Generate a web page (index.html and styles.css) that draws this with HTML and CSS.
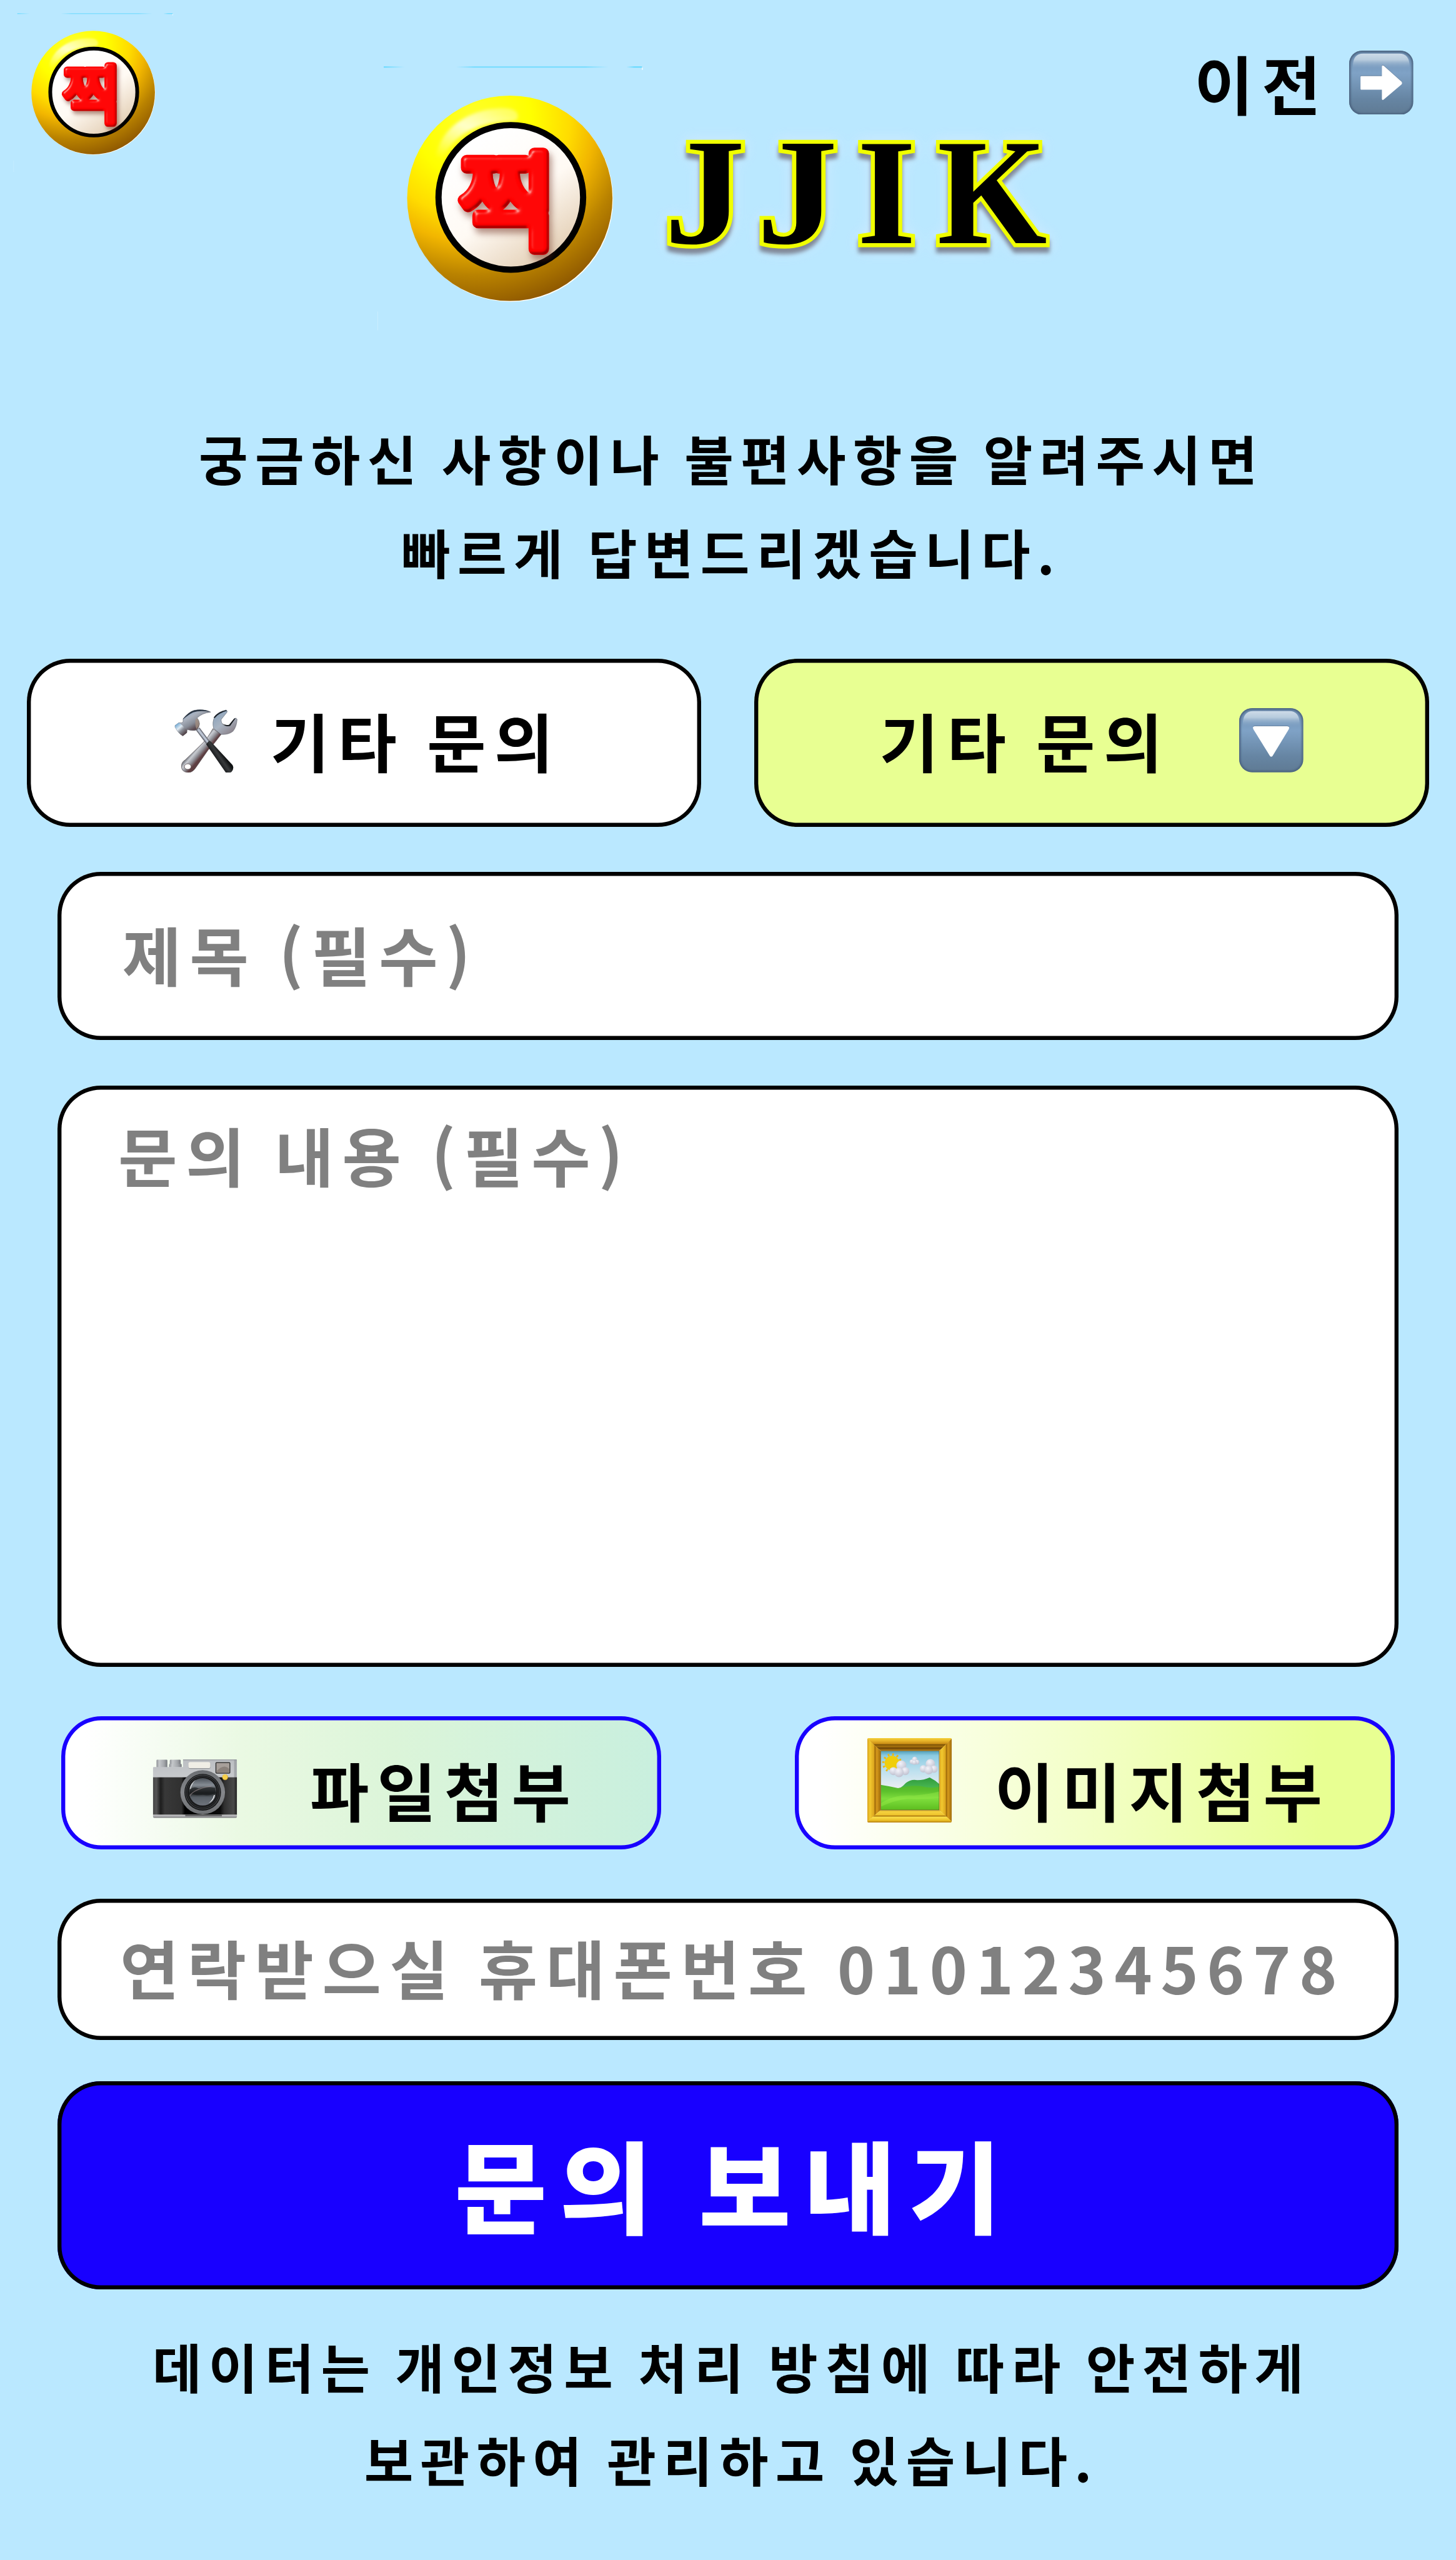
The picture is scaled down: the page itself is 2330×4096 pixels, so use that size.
FILE: index.html
```html
<!DOCTYPE html>
<html lang="ko">
<head>
<meta charset="utf-8">
<title>JJIK 문의</title>
<link rel="stylesheet" href="styles.css">
</head>
<body>
<svg class="defs" width="0" height="0" aria-hidden="true">
  <defs>
    <radialGradient id="ball" gradientUnits="userSpaceOnUse" cx="212" cy="135" r="352">
      <stop offset="0" stop-color="#ffff2a"/><stop offset=".3" stop-color="#ffff00"/>
      <stop offset=".5" stop-color="#ffdc00"/><stop offset=".63" stop-color="#f2b600"/>
      <stop offset=".8" stop-color="#b98200"/><stop offset="1" stop-color="#895300"/>
    </radialGradient>
    <linearGradient id="face" x1=".3" y1=".1" x2=".85" y2=".9">
      <stop offset="0" stop-color="#fff"/><stop offset=".5" stop-color="#fffaf4"/><stop offset="1" stop-color="#e2cdb2"/>
    </linearGradient>
    <linearGradient id="gloss" x1=".7" y1="0" x2=".1" y2="1">
      <stop offset="0" stop-color="#fff" stop-opacity=".35"/><stop offset=".4" stop-color="#fff" stop-opacity=".75"/><stop offset="1" stop-color="#fff" stop-opacity="0"/>
    </linearGradient>
    <filter id="soft" x="-20%" y="-20%" width="140%" height="140%"><feGaussianBlur stdDeviation="3"/></filter>
    <filter id="bevel" x="-20%" y="-20%" width="150%" height="150%" color-interpolation-filters="sRGB">
      <feGaussianBlur in="SourceAlpha" stdDeviation="4" result="b"/>
      <feSpecularLighting in="b" surfaceScale="7" specularConstant=".75" specularExponent="26" lighting-color="#ffc8c0" result="s">
        <feDistantLight azimuth="225" elevation="36"/>
      </feSpecularLighting>
      <feComposite in="s" in2="SourceAlpha" operator="in" result="hl"/>
      <feOffset in="SourceAlpha" dx="-3" dy="-4" result="o"/>
      <feComposite in="SourceAlpha" in2="o" operator="out" result="edge"/>
      <feGaussianBlur in="edge" stdDeviation="1.6" result="eb"/>
      <feFlood flood-color="#8a0000" flood-opacity=".9"/>
      <feComposite in2="eb" operator="in" result="ec"/>
      <feComposite in="ec" in2="SourceAlpha" operator="in" result="dark"/>
      <feGaussianBlur in="SourceAlpha" stdDeviation="6" result="sb"/>
      <feOffset in="sb" dx="5" dy="9" result="so"/>
      <feFlood flood-color="#6b2a1a" flood-opacity=".5"/>
      <feComposite in2="so" operator="in" result="sh"/>
      <feMerge><feMergeNode in="sh"/><feMergeNode in="SourceGraphic"/><feMergeNode in="dark"/><feMergeNode in="hl"/></feMerge>
    </filter>
    <linearGradient id="trace"><stop offset="0" stop-color="#5fd8ff"/><stop offset=".08" stop-color="#5fd8ff" stop-opacity="0"/><stop offset=".28" stop-color="#5fd8ff" stop-opacity="0"/><stop offset=".35" stop-color="#5fd8ff" stop-opacity=".8"/><stop offset=".78" stop-color="#5fd8ff" stop-opacity=".8"/><stop offset=".87" stop-color="#5fd8ff" stop-opacity="0"/><stop offset=".94" stop-color="#5fd8ff" stop-opacity="0"/><stop offset=".97" stop-color="#5fd8ff"/></linearGradient>
    <linearGradient id="key" x1="0" y1="0" x2="0" y2="1">
      <stop offset="0" stop-color="#6c8db0"/><stop offset=".35" stop-color="#7fa2c6"/><stop offset=".75" stop-color="#6685a3"/><stop offset="1" stop-color="#5f7a93"/>
    </linearGradient>
    <linearGradient id="keyshine" x1="0" y1="0" x2="0" y2="1">
      <stop offset="0" stop-color="#cddbe8"/><stop offset=".4" stop-color="#b7cbdd"/><stop offset="1" stop-color="#7fa2c6" stop-opacity="0"/>
    </linearGradient>
    <filter id="keyedge"><feGaussianBlur stdDeviation="2.5"/></filter>
    <clipPath id="keyclip"><rect width="192" height="192" rx="39"/></clipPath>
    <symbol id="logo" viewBox="0 0 560 560">
      <rect x="52" y="39.8" width="466" height="2.2" fill="url(#trace)"/>
      <rect x="518" y="42" width="1.4" height="4" fill="#fff"/>
      <rect x="40.6" y="482" width="1" height="34" fill="#cdeeff"/>
      <circle cx="281" cy="279.5" r="185" fill="#fff"/>
      <circle cx="279.5" cy="277.7" r="185.3" fill="url(#ball)"/>
      <path d="M146 206C150 160 196 118 262 115Q292 114 294 128Q296 138 281 139C222 140 184 160 160 201Q150 216 146 206Z" fill="url(#gloss)" filter="url(#soft)"/>
      <circle cx="281.3" cy="276.1" r="130.5" fill="url(#face)" stroke="#000" stroke-width="11.2"/>
      <text class="mark" x="275" y="354" text-anchor="middle" filter="url(#bevel)">찍</text>
    </symbol>
    <symbol id="keycap" viewBox="0 0 192 192">
      <rect width="192" height="192" rx="39" fill="url(#key)"/>
      <g clip-path="url(#keyclip)"><rect width="192" height="192" rx="39" fill="none" stroke="#4b6480" stroke-width="9" filter="url(#keyedge)"/></g>
      <path d="M11 48Q11 9 42 9H150Q181 9 181 48V56H11Z" fill="url(#keyshine)"/>
    </symbol>
    <linearGradient id="steel" gradientUnits="userSpaceOnUse" x1="120" y1="160" x2="220" y2="330">
      <stop offset="0" stop-color="#8fb0d6"/><stop offset=".45" stop-color="#a9b0bc"/><stop offset=".75" stop-color="#878c97"/><stop offset="1" stop-color="#5b4a50"/>
    </linearGradient>
    <linearGradient id="poll" gradientUnits="userSpaceOnUse" x1="90" y1="270" x2="170" y2="360">
      <stop offset="0" stop-color="#6fa6d0"/><stop offset=".35" stop-color="#dfeaf3"/><stop offset=".6" stop-color="#8b8f98"/><stop offset="1" stop-color="#4a3a3e"/>
    </linearGradient>
    <linearGradient id="wrench" gradientUnits="userSpaceOnUse" x1="270" y1="470" x2="340" y2="530">
      <stop offset="0" stop-color="#6d7178"/><stop offset=".3" stop-color="#c9ccd2"/><stop offset=".65" stop-color="#8f9097"/><stop offset="1" stop-color="#5e3f42"/>
    </linearGradient>
    <linearGradient id="jaw" gradientUnits="userSpaceOnUse" x1="440" y1="170" x2="580" y2="360">
      <stop offset="0" stop-color="#8ba3bb"/><stop offset=".5" stop-color="#a9b4c2"/><stop offset="1" stop-color="#8a8189"/>
    </linearGradient>
    <linearGradient id="grip" gradientUnits="userSpaceOnUse" x1="445" y1="590" x2="510" y2="545">
      <stop offset="0" stop-color="#17191b"/><stop offset=".55" stop-color="#383a3c"/><stop offset="1" stop-color="#101213"/>
    </linearGradient>
    <linearGradient id="body" x1="0" x2="1"><stop offset="0" stop-color="#454545"/><stop offset=".04" stop-color="#555"/><stop offset=".09" stop-color="#1d1d1d"/><stop offset=".14" stop-color="#383838"/><stop offset=".34" stop-color="#303030"/><stop offset=".38" stop-color="#000"/><stop offset=".8" stop-color="#0a0a0a"/><stop offset=".85" stop-color="#303030"/><stop offset=".96" stop-color="#4a4a4a"/><stop offset="1" stop-color="#222"/></linearGradient>
    <linearGradient id="plate" x1="0" y1="0" x2="0" y2="1"><stop offset="0" stop-color="#999ca1"/><stop offset=".1" stop-color="#bdc0c4"/><stop offset="1" stop-color="#c7c9cc"/></linearGradient>
    <linearGradient id="dial" x1="0" x2="1"><stop offset="0" stop-color="#8d9095"/><stop offset=".25" stop-color="#c5c8cb"/><stop offset=".7" stop-color="#a3a6aa"/><stop offset="1" stop-color="#777a7f"/></linearGradient>
    <linearGradient id="glass" x1="0" y1="0" x2="0" y2="1"><stop offset="0" stop-color="#4c5259"/><stop offset=".25" stop-color="#858c94"/><stop offset=".42" stop-color="#4e5154"/><stop offset=".55" stop-color="#1f2223"/><stop offset=".7" stop-color="#596067"/><stop offset="1" stop-color="#6f747d"/></linearGradient>
    <linearGradient id="rim" x1="0" y1="0" x2="0" y2="1"><stop offset="0" stop-color="#6b6e72"/><stop offset=".5" stop-color="#85878b"/><stop offset="1" stop-color="#6e7073"/></linearGradient>
    <linearGradient id="foot" x1="0" y1="0" x2="0" y2="1"><stop offset="0" stop-color="#c5c5c7"/><stop offset=".6" stop-color="#a5a5a8"/><stop offset="1" stop-color="#6d6d70"/></linearGradient>
    <linearGradient id="sky" x1="0" y1="0" x2="0" y2="1"><stop offset="0" stop-color="#4f9db5"/><stop offset=".08" stop-color="#8ccbe2"/><stop offset=".35" stop-color="#bfe1ef"/><stop offset=".65" stop-color="#efeff2"/></linearGradient>
    <linearGradient id="hill" x1="0" y1="0" x2="0" y2="1"><stop offset="0" stop-color="#4fb52e"/><stop offset=".25" stop-color="#5cc02c"/><stop offset=".55" stop-color="#7edd3c"/><stop offset="1" stop-color="#5cbd1f"/></linearGradient>
    <linearGradient id="ridge" x1="0" y1="0" x2="0" y2="1"><stop offset="0" stop-color="#2f9a3c"/><stop offset="1" stop-color="#5fd065"/></linearGradient>
    <linearGradient id="gtop" x1="0" y1="0" x2="0" y2="1"><stop offset="0" stop-color="#f3cf33"/><stop offset=".2" stop-color="#e9b62a"/><stop offset=".45" stop-color="#c98c14"/><stop offset=".52" stop-color="#7b5207"/><stop offset=".65" stop-color="#a9740e"/><stop offset=".8" stop-color="#6d4305"/><stop offset="1" stop-color="#c08a1c"/></linearGradient>
    <linearGradient id="gside" x1="0" x2="1"><stop offset="0" stop-color="#d9a31e"/><stop offset=".2" stop-color="#f2c92f"/><stop offset=".5" stop-color="#dba51d"/><stop offset=".56" stop-color="#9c6808"/><stop offset=".7" stop-color="#d79a1c"/><stop offset="1" stop-color="#a06c0a"/></linearGradient>
    <linearGradient id="gbot" x1="0" y1="0" x2="0" y2="1"><stop offset="0" stop-color="#b87e12"/><stop offset=".1" stop-color="#f5d240"/><stop offset=".4" stop-color="#efc42c"/><stop offset=".48" stop-color="#a46f0a"/><stop offset=".56" stop-color="#fbe04a"/><stop offset=".85" stop-color="#e9bb24"/><stop offset="1" stop-color="#b27a10"/></linearGradient>
    <radialGradient id="cloud" cx=".4" cy=".3" r=".8"><stop offset="0" stop-color="#f3f3fa"/><stop offset="1" stop-color="#b9bbcb"/></radialGradient>
    <clipPath id="canvasclip"><rect x="40" y="38" width="176" height="178"/></clipPath>
  </defs>
</svg>

<header class="header">
  <svg class="logo-small" role="img" aria-label="찍"><use href="#logo"/></svg>
  <div class="brand">
    <svg class="logo-large" role="img" aria-label="찍"><use href="#logo"/></svg>
    <h1 class="brand-name"><span class="j">J</span><span class="j">J</span><span class="i">I</span><span class="k">K</span></h1>
  </div>
  <a class="prev"><span>이전</span>
    <svg class="key-icon" viewBox="0 0 192 192"><use href="#keycap"/><path d="M36 76H98V47Q99 42 104 46L157 93Q160 97 157 101L104 146Q99 150 98 145V117H36Q34 117 34 114V79Q34 76 36 76Z" fill="#5a7088" opacity=".6" transform="translate(0 -1.5)"/><path d="M36 76H98V47Q99 42 104 46L157 93Q160 97 157 101L104 146Q99 150 98 145V117H36Q34 117 34 114V79Q34 76 36 76Z" fill="#fff"/></svg>
  </a>
</header>

<p class="copy intro">궁금하신 사항이나 불편사항을 알려주시면<br>빠르게 답변드리겠습니다.</p>

<main class="form">
  <div class="kinds">
    <button class="box kind">
      <svg class="key-icon" viewBox="66 126 576 576">
        <path d="M418 310L492 362C460 400 420 460 376 500L268 655Q236 708 190 704Q130 696 136 640Q140 606 170 590L330 436Q372 392 418 310Z" fill="url(#wrench)" stroke="#50484c" stroke-width="4"/>
        <ellipse cx="192" cy="651" rx="30" ry="25" fill="#fff" stroke="#4d3a3c" stroke-width="4"/>
        <path d="M536 143Q549 148 545 162L492 228Q490 262 518 281Q545 290 566 281L612 220Q626 209 635 226Q632 292 598 334Q560 366 492 362L424 308Q408 250 436 200Q466 158 536 143Z" fill="url(#jaw)" stroke="#4a525c" stroke-width="3"/>
        <path d="M424 210Q460 158 536 144L544 150Q470 170 434 216Z" fill="#1d242c"/>
        <path d="M500 262Q522 284 562 276L608 220L622 216L572 286Q528 296 500 262Z" fill="#15191d"/>
        <path d="M264 322L298 300L388 420L360 452Z" fill="#72757f"/>
        <path d="M276 322L292 308L378 424L366 438Z" fill="#bac3d2"/>
        <path d="M357 450L386 418Q402 428 412 440L594 636Q612 668 584 700Q556 716 532 702Z" fill="url(#grip)"/>
        <path d="M78 282L112 257Q140 262 150 250L150 222Q200 160 250 146Q330 130 398 162Q320 170 276 214Q296 236 298 268Q296 300 268 322Q244 334 186 318L184 346L148 375Q110 358 78 296Z" fill="url(#steel)" stroke="#555962" stroke-width="3"/>
        <path d="M78 282L112 257Q150 282 184 324L184 346L148 375Q110 358 78 296Z" fill="url(#poll)"/>
        <path d="M150 222Q200 160 250 146Q330 130 398 160Q300 144 240 164Q200 184 150 226Z" fill="#2a3542"/>
        <path d="M262 226Q276 216 280 222Q298 248 296 276Q286 300 270 312Q254 280 262 226Z" fill="#a18f82" opacity=".8"/>
      </svg>
      <span>기타 문의</span>
    </button>
    <button class="box kind kind-select">
      <span>기타 문의</span>
      <svg class="key-icon" viewBox="0 0 192 192"><use href="#keycap"/><path d="M47 54H143Q153 55 148 64L100 143Q96 148 92 143L43 64Q38 55 47 54Z" fill="#5a7088" opacity=".6" transform="translate(0 -1.5)"/><path d="M47 54H143Q153 55 148 64L100 143Q96 148 92 143L43 64Q38 55 47 54Z" fill="#fff"/></svg>
    </button>
  </div>

  <div class="box field title-field">제목 (필수)</div>
  <div class="box field message-field">문의 내용 (필수)</div>

  <div class="uploads">
    <button class="box upload upload-file">
      <svg class="camera" viewBox="85 105 765 535">
        <rect x="121" y="114" width="98" height="72" rx="8" fill="url(#dial)"/>
        <rect x="241" y="114" width="98" height="60" rx="8" fill="url(#dial)"/><rect x="234" y="152" width="114" height="30" rx="8" fill="url(#dial)"/>
        <path d="M90 186Q90 180 98 180H360V110H838Q845 110 845 118V275H90Z" fill="url(#plate)"/>
        <rect x="820" y="114" width="24" height="160" fill="#909397" opacity=".6"/>
        <rect x="90" y="272" width="755" height="338" fill="url(#body)"/>
        <path d="M90 609H845V628Q845 636 836 636H100Q90 636 90 628Z" fill="url(#foot)"/>
        <rect x="380" y="609" width="330" height="14" fill="#000" opacity=".45"/>
        <rect x="408" y="137" width="200" height="60" rx="20" fill="#77797c" opacity=".6"/>
        <rect x="408" y="134" width="198" height="56" rx="18" fill="#f0eee6"/>
        <rect x="656" y="139" width="126" height="96" rx="6" fill="#a79f9a" stroke="#222" stroke-width="7"/>
        <path d="M664 214Q700 178 736 176Q760 180 776 196V228H664Z" fill="#8a817b"/>
        <ellipse cx="537" cy="407" rx="201" ry="199" fill="url(#rim)"/>
        <circle cx="537" cy="407" r="165" fill="#191a1b"/>
        <circle cx="537" cy="405" r="153" fill="none" stroke="#45474a" stroke-width="6"/>
        <circle cx="537" cy="405" r="139" fill="none" stroke="#3a3b3e" stroke-width="5"/>
        <circle cx="537" cy="403" r="123" fill="url(#glass)"/>
        <path d="M420 380Q460 350 500 372Q560 350 650 366L654 410Q600 444 540 430Q470 440 424 414Z" fill="#171a1b" opacity=".65"/>
        <path d="M420 440Q450 390 560 362L616 352" fill="none" stroke="#a39494" stroke-width="7" opacity=".6"/>
        <path d="M648 430Q640 480 590 506Q632 470 636 434Z" fill="#fff" opacity=".85"/>
        <path d="M420 378Q430 320 476 294Q442 326 430 378Z" fill="#fff" opacity=".6"/>
        <circle cx="739" cy="272" r="26" fill="#b98a1c"/><circle cx="738" cy="269" r="24" fill="#f6cf4c"/>
      </svg>
      <span>파일첨부</span>
    </button>
    <button class="box upload upload-image">
      <svg class="frame" viewBox="0 0 253 253">
        <path d="M0 3Q0 0 3 0H250Q253 0 253 3L216 38H40Z" fill="url(#gtop)"/>
        <path d="M0 2L40 38V216L0 251Z" fill="url(#gside)"/>
        <path d="M253 2L216 38V216L253 251Z" fill="url(#gside)"/>
        <path d="M0 250L40 216H216L253 250Q253 253 250 253H3Q0 253 0 250Z" fill="url(#gbot)"/>
        <g clip-path="url(#canvasclip)">
          <rect x="40" y="38" width="176" height="178" fill="url(#sky)"/>
          <circle cx="74" cy="75" r="26" fill="none" stroke="#f2b90c" stroke-width="7" stroke-dasharray="5 8.6"/>
          <circle cx="74" cy="75" r="22" fill="#f0ce0c"/>
          <g fill="url(#cloud)">
            <circle cx="102" cy="82" r="15"/><circle cx="78" cy="99" r="12"/><circle cx="114" cy="99" r="12"/><circle cx="95" cy="103" r="14"/>
            <circle cx="142" cy="64" r="8"/><circle cx="134" cy="71" r="7"/><circle cx="149" cy="72" r="7"/><circle cx="141" cy="73" r="7"/>
            <circle cx="189" cy="77" r="14"/><circle cx="168" cy="92" r="11"/><circle cx="200" cy="93" r="11"/><circle cx="184" cy="96" r="13"/>
          </g>
          <path d="M80 158Q100 152 116 134Q132 122 150 126Q170 126 187 118Q204 126 216 138V176H80Z" fill="url(#ridge)"/>
          <path d="M40 140Q66 144 92 150Q130 140 160 144Q190 152 216 146V216H40Z" fill="url(#hill)"/>
          <path d="M40 196Q80 168 140 172Q190 168 216 160V180Q160 184 120 182Q76 188 40 206Z" fill="#a1f04e" opacity=".35"/>
          <rect x="40" y="38" width="176" height="178" fill="none" stroke="#6b4a10" stroke-width="2"/>
        </g>
      </svg>
      <span>이미지첨부</span>
    </button>
  </div>

  <div class="box field phone-field">연락받으실 휴대폰번호 01012345678</div>
  <button class="box submit">문의 보내기</button>
</main>

<p class="copy privacy">데이터는 개인정보 처리 방침에 따라 안전하게<br>보관하여 관리하고 있습니다.</p>
</body>
</html>
```
FILE: styles.css
```css
/* 1rem = 100 design units of the 4368 x 7680 artboard */
html { font-size: 53.34px; background: #bae8ff; }
* { box-sizing: border-box; }
body {
  margin: 0;
  width: 43.68rem;
  height: 76.79rem;
  overflow: hidden;
  background: #bae8ff;
  color: #000;
  font-family: "Noto Sans CJK KR", sans-serif;
  font-weight: 700;
  white-space: nowrap;
}
.defs { display: block; position: absolute; }
.mark {
  font: 400 190px "Noto Sans CJK KR", sans-serif;
  letter-spacing: 0;
  fill: #f00;
  stroke: #f00;
  stroke-width: 21px;
  stroke-linejoin: round;
}

.header { display: flex; align-items: flex-start; height: 12.345rem; }
.logo-small { width: 5.6rem; height: 5.6rem; flex: none; }
.brand { display: flex; margin: 1.33rem 0 0 5.05rem; }
.logo-large { width: 9.31rem; height: 9.31rem; flex: none; }
.brand-name {
  margin: 2.16rem 0 0 .12rem;
  font: 700 4.55rem/1 "Liberation Serif", serif;
  letter-spacing: .11em;
  -webkit-text-stroke: .24rem #f0ff00;
  paint-order: stroke fill;
  filter: drop-shadow(0 .17rem .06rem rgba(60, 40, 50, .5)) drop-shadow(0 0 .2rem rgba(225, 235, 255, .6));
}
.brand-name span { display: inline-block; }
.brand-name .j { transform: scaleX(1.07); transform-origin: 2.2rem 50%; }
.brand-name .i { margin-left: .08rem; }
.brand-name .k { margin-left: .14rem; transform: scaleX(.93); transform-origin: 0 50%; }
.prev {
  display: flex;
  align-items: center;
  margin: 1.51rem 1.27rem 0 auto;
  height: 1.93rem;
  gap: .61rem;
  font-size: 1.925rem;
  line-height: 1;
  letter-spacing: .13em;
}
.key-icon { width: 1.925rem; height: 1.925rem; flex: none; display: block; }

.copy {
  margin: 0;
  padding-left: .21rem;
  font-size: 1.603rem;
  line-height: 2.8rem;
  letter-spacing: .131em;
  word-spacing: -.07em;
  text-align: center;
}
.intro { height: 7.415rem; }

.form { display: flex; flex-direction: column; }
.box {
  display: flex;
  align-items: center;
  margin: 0;
  border: 0;
  padding: 0;
  border-radius: 1.3rem;
  background: #fff;
  box-shadow: inset 0 0 0 .12rem #000;
  font: inherit;
  font-size: 1.925rem;
  line-height: 1;
  letter-spacing: .13em;
  word-spacing: -.07em;
  color: #000;
}
.kinds { display: flex; gap: 1.59rem; padding: 0 .8rem; }
.kind { width: 20.24rem; height: 5.04rem; padding: 0 0 .14rem 4.42rem; gap: .97rem; }
.kind-select { background: #e8ff92; padding-left: 3.76rem; gap: 2.05rem; }

.field { margin: 1.36rem 1.72rem 0; color: #808080; }
.title-field { height: 5.04rem; padding: 0 0 .11rem 1.95rem; }
.message-field { height: 17.44rem; padding: 1.11rem 0 0 1.83rem; align-items: flex-start; }
.phone-field { height: 4.24rem; margin-top: 1.48rem; padding: 0 0 .13rem 1.88rem; }

.uploads { display: flex; justify-content: space-between; margin: 1.48rem 1.84rem 0; }
.upload { width: 18rem; height: 4rem; border-radius: 1.2rem; box-shadow: inset 0 0 0 .12rem #1800ff; }
.upload span { padding-top: .42rem; letter-spacing: .127em; }
.upload-file { padding-left: 2.74rem; gap: 2.17rem; background: linear-gradient(90deg, #fff 4%, #eaf9e3 30%, #dcf5d9 55%, #c8efde 100%); }
.upload-image { padding-left: 2.19rem; gap: 1.28rem; background: linear-gradient(90deg, #fff 4%, #f4ffcc 45%, #e8ff92 88%); }
.camera { width: 2.55rem; height: 1.783rem; margin-top: .33rem; flex: none; }
.frame { width: 2.53rem; height: 2.53rem; margin-bottom: .14rem; flex: none; }

.submit {
  justify-content: center;
  height: 6.24rem;
  margin: 1.24rem 1.72rem 0;
  padding: 0 0 .18rem .38rem;
  background: #1800ff;
  color: #fff;
  font-size: 3rem;
  font-weight: 900;
}
.privacy { padding-top: .89rem; }
```
